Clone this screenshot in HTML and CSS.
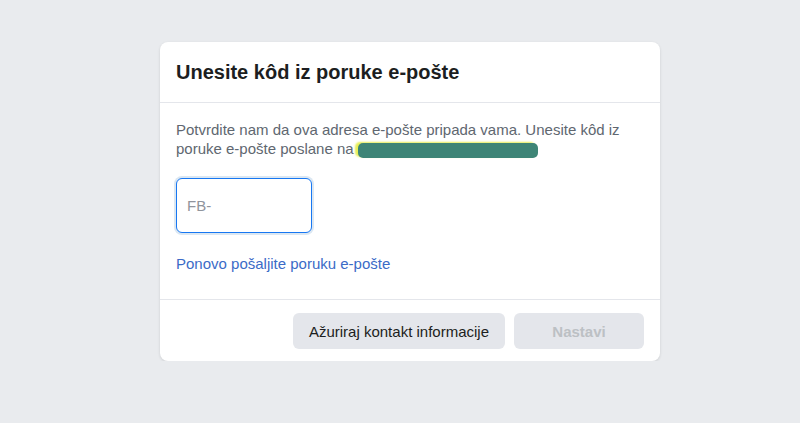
FILE: index.html
```html
<!DOCTYPE html>
<html lang="hr">
<head>
  <meta charset="UTF-8">
  <meta name="viewport" content="width=device-width, initial-scale=1.0">
  <title>Unesite kôd iz poruke e-pošte</title>
  <link rel="stylesheet" href="styles.css">
</head>
<body>
  <div class="page">
    <div class="card">
      <div class="card-header">
        <h2>Unesite kôd iz poruke e-pošte</h2>
      </div>
      <div class="card-body">
        <p class="info">Potvrdite nam da ova adresa e-pošte pripada vama. Unesite kôd iz poruke e-pošte poslane na <span class="redacted"></span></p>
        <input type="text" class="code-input" placeholder="FB-">
        <a href="#" class="resend">Ponovo pošaljite poruku e-pošte</a>
      </div>
      <div class="card-footer">
        <button class="btn">Ažuriraj kontakt informacije</button>
        <button class="btn btn-disabled" disabled>Nastavi</button>
      </div>
    </div>
  </div>
</body>
</html>
```

FILE: styles.css
```css
body {
  font-family: "Liberation Sans", Arial, sans-serif;
  margin: 0;
  padding: 0;
  background-color: #e9ebee;
}
.page {
  padding: 42px 0 0 160px;
  display: flex;
}
.card {
  width: 500px;
  background: #fff;
  border-radius: 8px;
  box-shadow: 0 1px 3px rgba(0, 0, 0, 0.12);
}
.card-header {
  height: 60px;
  display: flex;
  align-items: center;
  padding: 0 16px;
  border-bottom: 1px solid #e4e6eb;
}
.card-header h2 {
  margin: 0;
  font-size: 20px;
  font-weight: bold;
  color: #1c1e21;
}
.card-body {
  padding: 17px 16px 0;
  height: 179px;
  border-bottom: 1px solid #e4e6eb;
  display: flex;
  flex-direction: column;
  align-items: flex-start;
}
.info {
  margin: 0;
  font-size: 15px;
  line-height: 19px;
  color: #606770;
  width: 468px;
}
.redacted {
  display: inline-block;
  width: 180px;
  height: 15px;
  vertical-align: -4px;
  background: #3e8576;
  border-radius: 5px;
  box-shadow: -3px -1px 2px #e7ef55;
}
.code-input {
  margin-top: 20px;
  width: 136px;
  height: 55px;
  box-sizing: border-box;
  border: 1px solid #1877f2;
  border-radius: 6px;
  box-shadow: 0 0 0 2px #dbe7f2;
  padding: 0 10px;
  font-family: inherit;
  font-size: 15px;
  color: #1c1e21;
  outline: none;
}
.code-input::placeholder {
  color: #90949c;
}
.resend {
  margin-top: 22px;
  font-size: 15px;
  color: #3b6bc7;
  text-decoration: none;
}
.card-footer {
  display: flex;
  justify-content: flex-end;
  gap: 9px;
  padding: 13px 16px 12px;
}
.btn {
  height: 36px;
  padding: 0 16px;
  border: none;
  border-radius: 6px;
  background-color: #e4e6eb;
  color: #1c1e21;
  font-family: inherit;
  font-size: 15px;
  cursor: pointer;
}
.btn-disabled {
  width: 130px;
  color: #bcc0c4;
  font-weight: bold;
  cursor: default;
}
```
